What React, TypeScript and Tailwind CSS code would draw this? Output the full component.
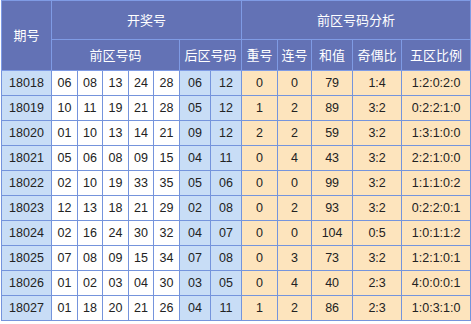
const rows: [string, string[], string[], (string | number)[]][] = [
  ["18018", ["06", "08", "13", "24", "28"], ["06", "12"], [0, 0, 79, "1:4", "1:2:0:2:0"]],
  ["18019", ["10", "11", "19", "21", "28"], ["05", "12"], [1, 2, 89, "3:2", "0:2:2:1:0"]],
  ["18020", ["01", "10", "13", "14", "21"], ["09", "12"], [2, 2, 59, "3:2", "1:3:1:0:0"]],
  ["18021", ["05", "06", "08", "09", "15"], ["04", "11"], [0, 4, 43, "3:2", "2:2:1:0:0"]],
  ["18022", ["02", "10", "19", "33", "35"], ["05", "06"], [0, 0, 99, "3:2", "1:1:1:0:2"]],
  ["18023", ["12", "13", "18", "21", "29"], ["02", "08"], [0, 2, 93, "3:2", "0:2:2:0:1"]],
  ["18024", ["02", "16", "24", "30", "32"], ["04", "07"], [0, 0, 104, "0:5", "1:0:1:1:2"]],
  ["18025", ["07", "08", "09", "15", "34"], ["07", "08"], [0, 3, 73, "3:2", "1:2:1:0:1"]],
  ["18026", ["01", "02", "03", "04", "30"], ["03", "05"], [0, 4, 40, "2:3", "4:0:0:0:1"]],
  ["18027", ["01", "18", "20", "21", "26"], ["04", "11"], [1, 2, 86, "2:3", "1:0:3:1:0"]],
];

const widths = [50, 26, 25, 26, 25, 26, 31, 31, 36, 34, 41, 49, 69];

const th = "border border-[#7f9be4] bg-[#6372b5] text-white font-normal text-center";
const td = "border border-[#7594dc] text-center text-[#222]";

export default function App() {
  return (
    <div className="w-[471px] h-[324px] bg-white pl-px">
      <table
        className="table-fixed border-collapse w-[469px] text-[12.5px] leading-none"
        style={{ fontFamily: '"Liberation Sans", Arial, "Noto Sans CJK SC", sans-serif' }}
      >
        <colgroup>
          {widths.map((w, i) => (
            <col key={i} style={{ width: w }} />
          ))}
        </colgroup>
        <thead className="text-[13px]">
          <tr className="h-[39px]">
            <th rowSpan={2} className={th}>期号</th>
            <th colSpan={7} className={th}>开奖号</th>
            <th colSpan={5} className={th}>前区号码分析</th>
          </tr>
          <tr className="h-[31px]">
            <th colSpan={5} className={th}>前区号码</th>
            <th colSpan={2} className={th}>后区号码</th>
            <th className={th}>重号</th>
            <th className={th}>连号</th>
            <th className={th}>和值</th>
            <th className={th}>奇偶比</th>
            <th className={th}>五区比例</th>
          </tr>
        </thead>
        <tbody>
          {rows.map(([id, front, back, stats]) => (
            <tr key={id} className="h-[25px]">
              <td className={`${td} bg-[#c8ddf6]`}>{id}</td>
              {front.map((n, i) => (
                <td key={i} className={`${td} bg-white`}>{n}</td>
              ))}
              {back.map((n, i) => (
                <td key={i} className={`${td} bg-[#c8ddf6]`}>{n}</td>
              ))}
              {stats.map((s, i) => (
                <td key={i} className={`${td} bg-[#fde4bd]`}>{s}</td>
              ))}
            </tr>
          ))}
        </tbody>
      </table>
    </div>
  );
}
